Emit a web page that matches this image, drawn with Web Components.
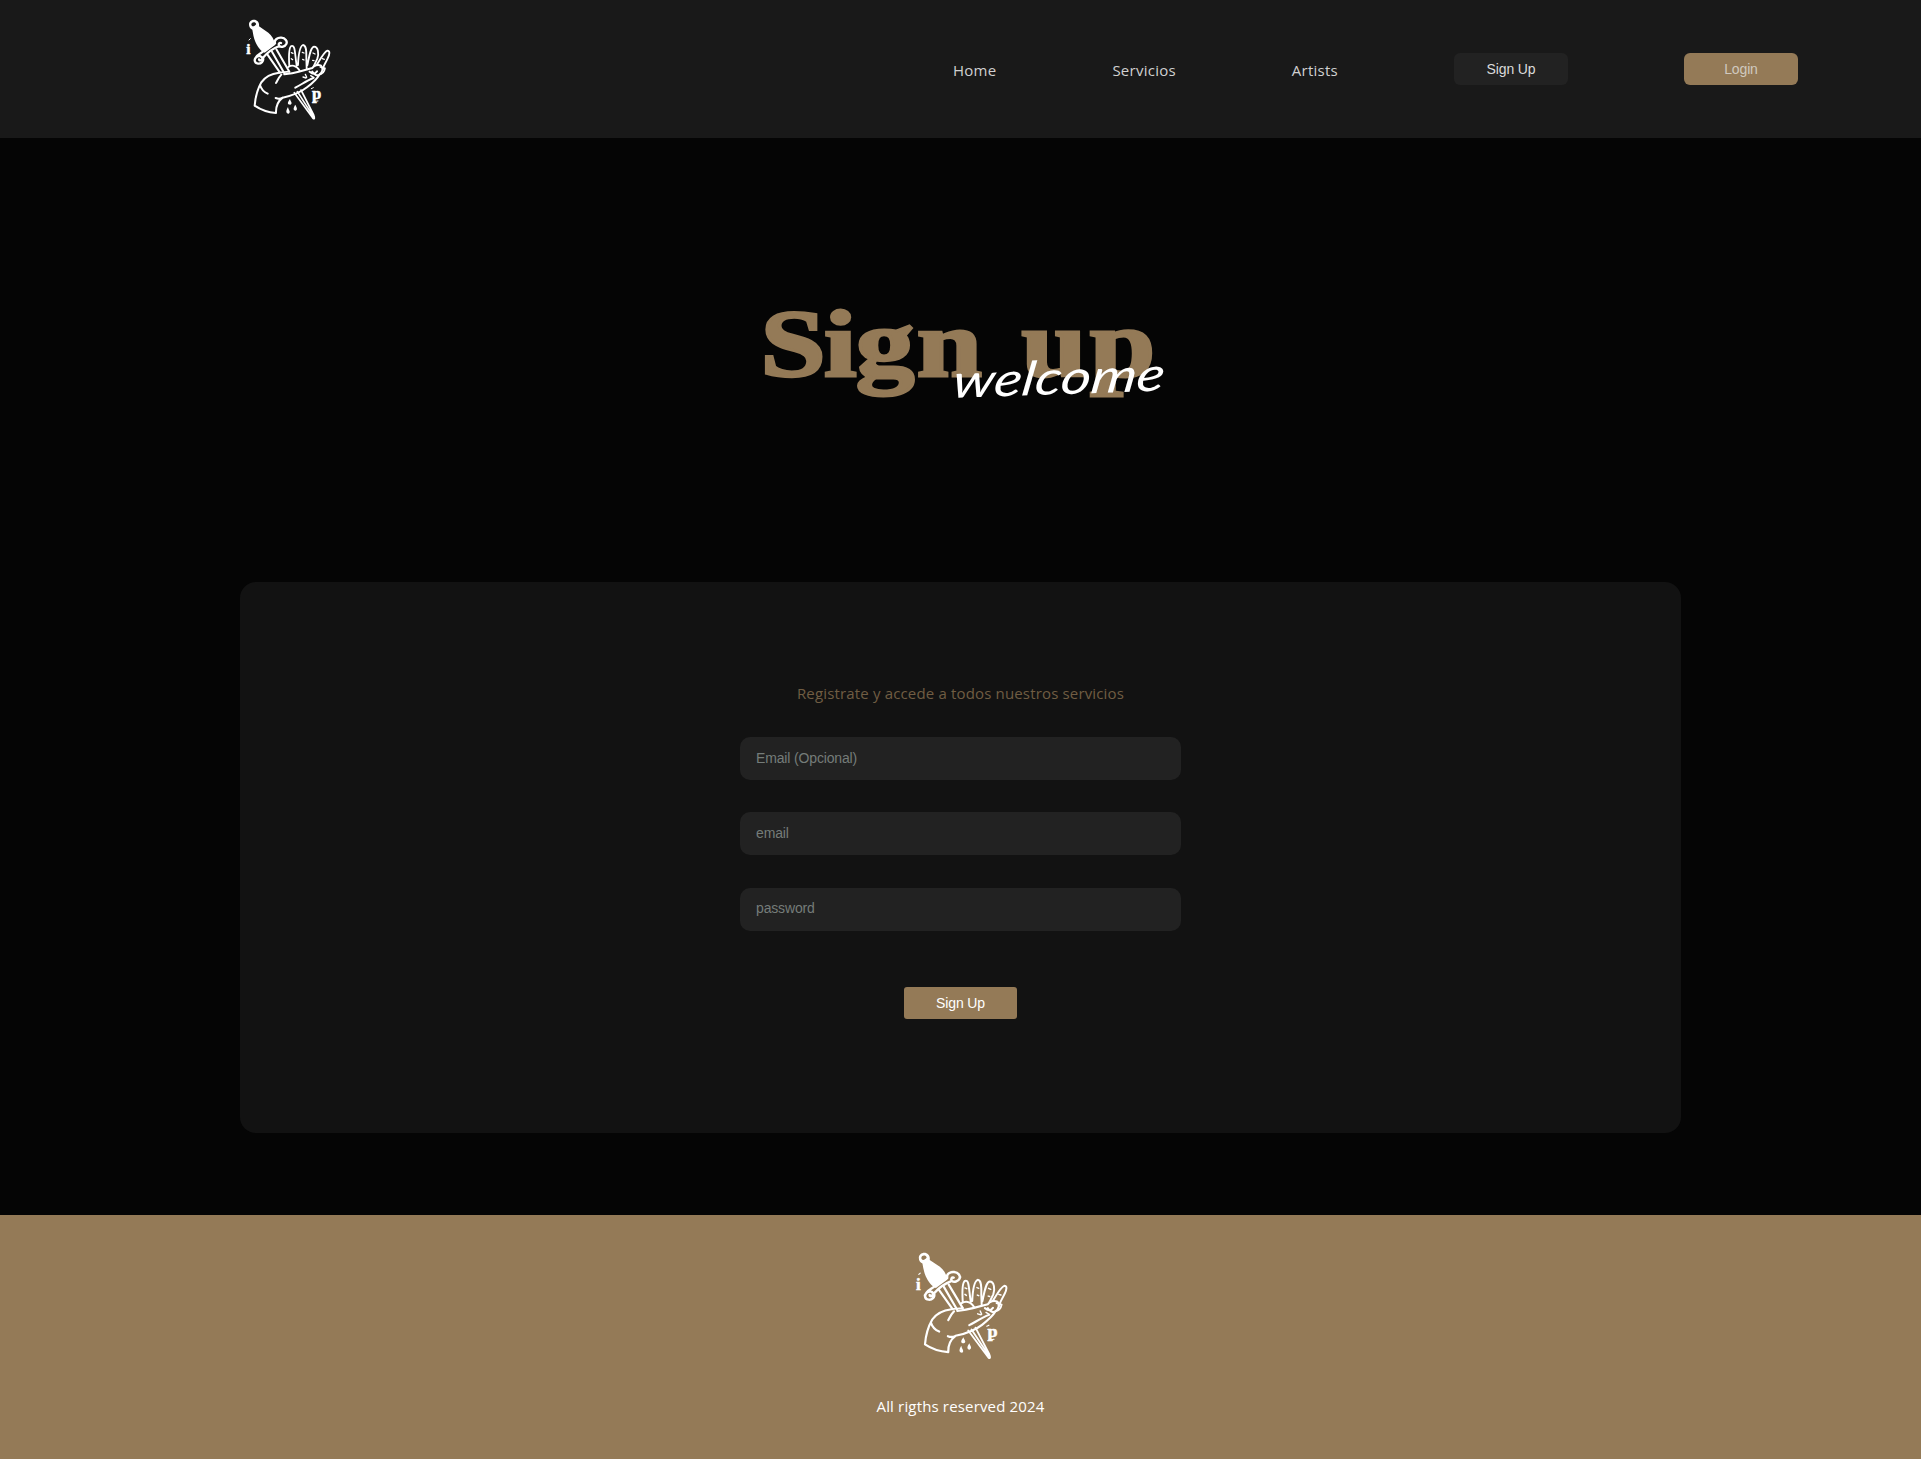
<!DOCTYPE html>
<html lang="es">
<head>
<meta charset="utf-8">
<title>Sign up</title>
<style>
html,body{margin:0;background:#fff}
body{font-family:"Open Sans","Noto Sans",sans-serif;font-size:15px;letter-spacing:.16px}
</style>
</head>
<body>
<ink-page></ink-page>
<script>
const define = (name, html) => {
  const t = document.createElement('template');
  t.innerHTML = html;
  customElements.define(name, class extends HTMLElement {
    constructor() {
      super();
      this.attachShadow({mode: 'open'}).appendChild(t.content.cloneNode(true));
    }
    connectedCallback() {
      const field = this.shadowRoot.querySelector('input');
      if (field) field.placeholder = this.getAttribute('placeholder') || '';
    }
  });
};

define('ink-logo', `
<style>:host{display:block;width:100px;height:110px}svg{display:block;width:100%;height:100%}
text{font-family:"Liberation Serif",serif;font-weight:bold;fill:#fff;stroke:#fff;stroke-width:1.5}</style>
<svg viewBox="30 20 300 330" preserveAspectRatio="none" fill="none" stroke="#fff" stroke-width="6" stroke-linecap="round" stroke-linejoin="round">
  <path fill="#fff" stroke="none" fill-rule="evenodd" d="M57 42C57 34 64 28 72 28C82 28 89 37 87 48L115 67C125 76 132 86 134 98L135 104L104 127C93 123 82 108 76 94C71 82 69 69 67 58C60 55 57 50 57 42ZM64 42C64 48 69 50 74 46C79 43 80 40 76 37C71 34 65 36 64 42Z"/>
  <path stroke-width="7" d="M101 122C112 111 124 104 135 99C132 88 143 81 154 82C166 83 173 93 169 101C165 109 154 112 148 107C144 102 148 96 153 98M148 107C132 113 111 128 99 142C102 153 93 161 84 160C74 159 71 148 78 141C86 134 97 137 96 145C95 151 87 152 87 147M101 122C92 130 83 132 78 141"/>
  <path stroke-width="6" d="M112 132L150 187M126 124L163 189M139 117L178 184"/>
  <path stroke-width="5.5" d="M178 168C177 149 174 113 184 107C196 103 194 128 200 166M175 170C184 164 199 163 209 181M204 164C205 141 209 108 219 104C231 105 229 131 229 146L230 174M232 165C237 142 241 111 252 109C265 109 267 131 262 145L252 166M260 164C270 148 283 124 292 121C301 121 299 132 293 144C287 158 278 169 279 177"/>
  <path stroke-width="4" d="M184 127L189 129M217 126L222 128M249 128L255 131M184 145L188 148M218 147L222 149M248 150L252 151M277 145L283 147"/>
  <path d="M163 192C180 190 192 188 206 184L247 173C251 165 265 161 273 166C281 174 277 187 268 193C262 198 251 192 247 184M147 187C123 190 104 201 94 216C84 234 76 260 74 286C90 297 111 306 138 308C137 284 146 271 158 262C182 257 206 251 231 231C250 216 262 204 268 193M239 184C249 192 254 192 261 183M90 224C94 237 101 245 113 250M154 193C143 205 142 212 138 218M137 263C146 267 151 266 158 262M196 232C215 222 230 211 250 203"/>
  <path stroke-width="5" d="M271 170L285 174C283 185 277 191 268 193M147 187L178 184"/>
  <path stroke-width="4" d="M219 200L228 203M226 192L230 201M242 196L252 202"/>
  <path stroke-width="5" d="M193 247L249 324C254 328 254 321 251 314L213 239M202 244L250 318"/>
  <path fill="#fff" stroke="none" d="M180 266C181 273 190 279 181 283C170 283 173 275 180 266ZM196 283C200 292 204 297 197 301C188 300 190 292 196 283ZM174 290C175 299 184 305 176 310C166 309 168 300 174 290Z"/>
  <text x="49" y="132" font-size="46">i</text>
  <text x="246" y="265" font-size="50">p</text>
  <path stroke-width="3" d="M57 89L61 85M244 235L250 232M249 274L264 272"/>
</svg>`);

define('ink-button', `
<style>:host{display:flex;align-items:center;justify-content:center;width:114px;height:32px;border-radius:6px;background:var(--bg,#222);color:var(--fg,#dbdbdb);font:14px/16px "Liberation Sans",Arial,sans-serif;letter-spacing:-.15px}</style><slot></slot>`);

define('ink-nav', `
<style>
:host{display:flex;height:138px;background:#191919;color:#d0d0d0}
.brand{padding:17px 0 0 240px}
nav{flex:1;display:flex;justify-content:flex-end;align-items:center;gap:116px;padding-right:123px}
a{color:inherit;line-height:20px;padding-top:1px;letter-spacing:.25px}
</style>
<div class="brand"><ink-logo></ink-logo></div>
<nav><a>Home</a><a>Servicios</a><a>Artists</a><ink-button>Sign Up</ink-button><ink-button style="--bg:#947a57;--fg:#d0c9bf">Login</ink-button></nav>`);

define('ink-title', `
<style>:host{display:block;width:440px;height:130px;letter-spacing:0}svg{display:block;overflow:visible}
.big{font:bold 96px "Liberation Serif",serif;fill:#947a57;stroke:#947a57;stroke-width:3}
.script{font:italic 47px Lato,sans-serif;fill:#fff}</style>
<svg width="440" height="130" viewBox="0 0 440 130">
  <text class="big" y="86" transform="scale(1.22 1)" x="16 68 94 144 190 230 286">Sign up</text>
  <text class="script" transform="translate(210 108) rotate(-2) skewX(-10)" textLength="212" lengthAdjust="spacingAndGlyphs">welcome</text>
</svg>`);

define('ink-field', `
<style>:host{display:block;height:43px}
input{display:block;box-sizing:border-box;width:100%;height:100%;margin:0;border:0;border-radius:10px;padding:0 16px 2px;background:#222;color:#ddd;font:14px "Liberation Sans",Arial,sans-serif;letter-spacing:-.15px;outline:0}
input::placeholder{color:#757c79;opacity:1}</style>
<input>`);

define('ink-form', `
<style>
:host{display:flex;flex-direction:column;align-items:center;box-sizing:border-box;width:1441px;height:551px;border-radius:16px;background:#121212;padding-top:101px}
p{margin:0 0 34px;line-height:20px;color:#705d43}
.fields{display:flex;flex-direction:column;gap:32.4px;width:441px;margin-bottom:56px}
ink-button{border-radius:3px;width:113px}
</style>
<p>Registrate y accede a todos nuestros servicios</p>
<div class="fields"><ink-field placeholder="Email (Opcional)"></ink-field><ink-field placeholder="email"></ink-field><ink-field placeholder="password"></ink-field></div>
<ink-button style="--bg:#947a57;--fg:#fff">Sign Up</ink-button>`);

define('ink-footer', `
<style>:host{display:flex;flex-direction:column;align-items:center;box-sizing:border-box;height:244px;background:#947a57;color:#fff;padding-top:35px}
ink-logo{width:109px;height:117px;margin:0 0 29px 5px}
p{margin:0;line-height:20px}</style>
<ink-logo></ink-logo><p>All rigths reserved 2024</p>`);

define('ink-page', `
<style>:host{display:block;height:1460px;background:#fff}
main{display:flex;flex-direction:column;align-items:center;box-sizing:border-box;height:1077px;background:#050505;padding-top:152px}
ink-title{margin-bottom:162px}</style>
<ink-nav></ink-nav><main><ink-title></ink-title><ink-form></ink-form></main><ink-footer></ink-footer>`);
</script>
</body>
</html>
